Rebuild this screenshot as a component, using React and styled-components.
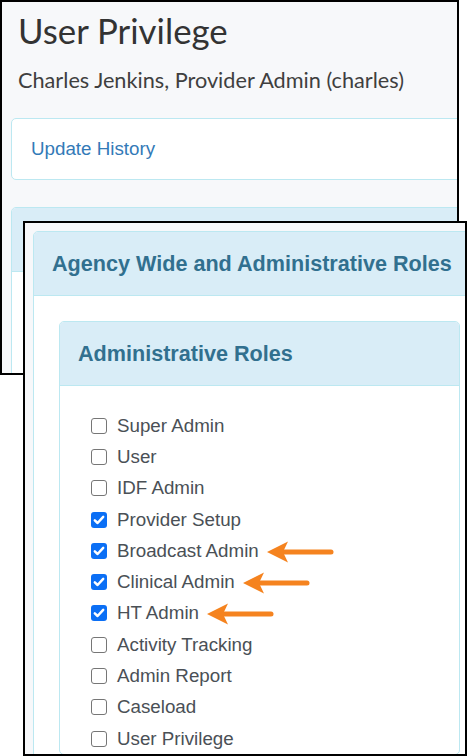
import React from "react";
import styled, { createGlobalStyle } from "styled-components";

const Global = createGlobalStyle`
  html, body { margin: 0; padding: 0; background: #ffffff; }
  * { box-sizing: border-box; }
`;

const Canvas = styled.div`
  position: relative;
  width: 467px;
  height: 756px;
  overflow: hidden;
  background: #ffffff;
`;

const BackWindow = styled.div`
  width: 459px;
  height: 375px;
  border: 2px solid #000;
  background: #f7f8fa;
  overflow: hidden;
`;

const BackInner = styled.div`
  width: 520px;
  padding: 8px 0 0 9px;
  display: flex;
  flex-direction: column;
`;

const Title = styled.h1`
  margin: 0 0 0 7px;
  font-family: Lato, "Open Sans", sans-serif;
  font-weight: 400;
  font-size: 34.8px;
  line-height: 1.2;
  color: #333333;
`;

const Subtitle = styled.div`
  margin: 15px 0 0 7px;
  font-family: Lato, "Open Sans", sans-serif;
  font-size: 21.7px;
  line-height: 1.2;
  color: #3f3f3f;
`;

const HistoryCard = styled.div`
  margin-top: 25px;
  height: 62px;
  display: flex;
  align-items: center;
  padding-left: 19px;
  background: #ffffff;
  border: 1px solid #bce8f1;
  border-radius: 5px;
`;

const Link = styled.a`
  font-family: "Liberation Sans", Arial, sans-serif;
  font-size: 18.75px;
  color: #337ab7;
  text-decoration: none;
`;

const Panel = styled.div`
  margin-top: ${(p) => p.$mt || 0}px;
  width: ${(p) => p.$w}px;
  background: #ffffff;
  border: 1px solid #bce8f1;
  border-radius: 5px;
  overflow: hidden;
`;

const PanelHeading = styled.div`
  height: 64px;
  display: flex;
  align-items: center;
  padding-left: 18px;
  background: #d9edf7;
  border-bottom: 1px solid #bce8f1;
  font-family: "Liberation Sans", Arial, sans-serif;
  font-weight: 700;
  font-size: 21.6px;
  color: #31708f;
  white-space: nowrap;
`;

const FrontWindow = styled.div`
  position: absolute;
  left: 23px;
  top: 221px;
  width: 444px;
  height: 535px;
  border: 2px solid #000;
  background: #f7f8fa;
  overflow: hidden;
  padding: 8px 0 0 8px;
`;

const PanelBody = styled.div`
  padding: ${(p) => p.$pad};
  min-height: ${(p) => p.$minH || 0}px;
`;

const RoleList = styled.ul`
  list-style: none;
  margin: 0;
  padding: 0;
`;

const Row = styled.li`
  height: 31.3px;
  display: flex;
  align-items: center;
  font-family: "Liberation Sans", Arial, sans-serif;
  font-size: 18.75px;
  color: #4a5056;
  white-space: nowrap;
`;

const Box = styled.span`
  width: 16px;
  height: 16px;
  flex: none;
  margin-right: 10px;
  border-radius: 3px;
  border: ${(p) => (p.$on ? "none" : "1.5px solid #767676")};
  background: ${(p) => (p.$on ? "#0b6ff5" : "#ffffff")};
  display: flex;
  align-items: center;
  justify-content: center;
`;

const Arrow = styled.svg`
  flex: none;
  margin-left: 8px;
  margin-top: 2px;
`;

const roles = [
  { label: "Super Admin" },
  { label: "User" },
  { label: "IDF Admin" },
  { label: "Provider Setup", on: true },
  { label: "Broadcast Admin", on: true, arrow: true },
  { label: "Clinical Admin", on: true, arrow: true },
  { label: "HT Admin", on: true, arrow: true },
  { label: "Activity Tracking" },
  { label: "Admin Report" },
  { label: "Caseload" },
  { label: "User Privilege" },
];

function Check({ on }) {
  return (
    <Box $on={on}>
      {on && (
        <svg width="14" height="14" viewBox="0 0 13 13">
          <path d="M2.6 6.8 L5.2 9.3 L10.4 3.6" fill="none" stroke="#fff" strokeWidth="2.3" strokeLinecap="round" strokeLinejoin="round" />
        </svg>
      )}
    </Box>
  );
}

function OrangeArrow() {
  return (
    <Arrow width="67" height="22" viewBox="0 0 67 22">
      <line x1="15" y1="11" x2="64" y2="11" stroke="#f5831f" strokeWidth="5" strokeLinecap="round" />
      <path d="M0 11 L21 0.5 L16 11 L21 21.5 Z" fill="#f5831f" />
    </Arrow>
  );
}

export default function App() {
  return (
    <>
      <Global />
      <Canvas>
        <BackWindow>
          <BackInner>
            <Title>User Privilege</Title>
            <Subtitle>Charles Jenkins, Provider Admin (charles)</Subtitle>
            <HistoryCard>
              <Link href="#">Update History</Link>
            </HistoryCard>
            <Panel $mt={27} $w={500}>
              <PanelHeading />
              <PanelBody $pad="0" $minH={120} />
            </Panel>
          </BackInner>
        </BackWindow>
        <FrontWindow>
          <Panel $w={453}>
            <PanelHeading>Agency Wide and Administrative Roles</PanelHeading>
            <PanelBody $pad="25px 25px">
              <Panel $w={401}>
                <PanelHeading>Administrative Roles</PanelHeading>
                <PanelBody $pad="24px 0 0 31px">
                  <RoleList>
                    {roles.map((r) => (
                      <Row key={r.label}>
                        <Check on={r.on} />
                        {r.label}
                        {r.arrow && <OrangeArrow />}
                      </Row>
                    ))}
                  </RoleList>
                </PanelBody>
              </Panel>
            </PanelBody>
          </Panel>
        </FrontWindow>
      </Canvas>
    </>
  );
}
